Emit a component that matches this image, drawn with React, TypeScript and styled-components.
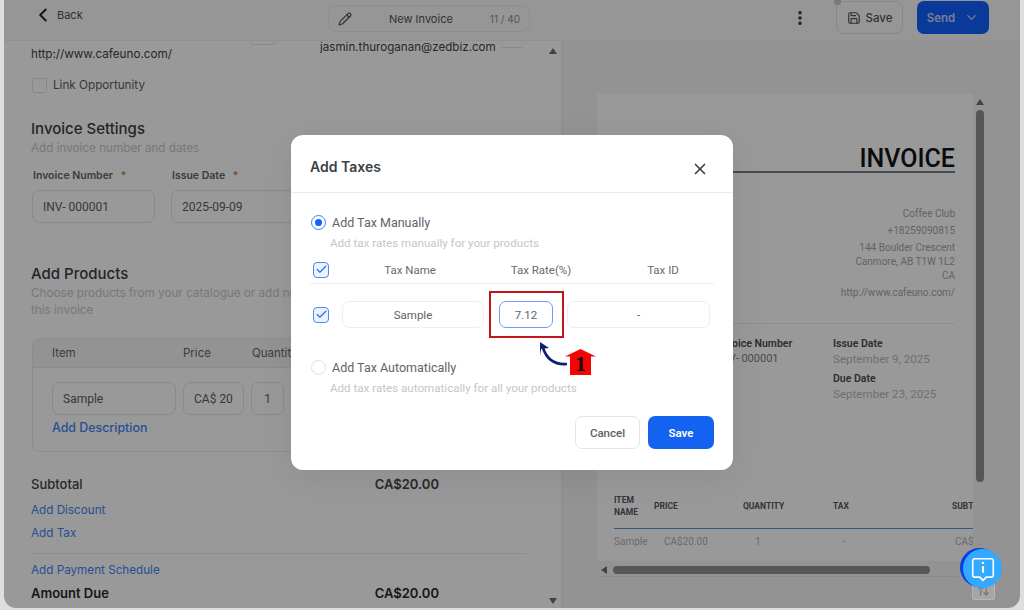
import React from "react";
import styled, { createGlobalStyle } from "styled-components";
import { ArrowUpDown, Check, ChevronDown, ChevronLeft, EllipsisVertical, Pencil, Save, X } from "lucide-react";

const GlobalStyle = createGlobalStyle`
  html, body {
    margin: 0;
    padding: 0;
    height: 100%;
    overflow: hidden;
  }
  * {
    box-sizing: border-box;
  }
  body {
    font-family: Inter, "Liberation Sans", sans-serif;
  }
`;

const Viewport = styled.div`
  width: 1024px;
  height: 610px;
  padding: 0 4px 2px;
  background-color: #dedede;
`;

const Frame = styled.div`
  position: relative;
  display: flex;
  flex-direction: column;
  height: 100%;
  background-color: #ffffff;
  border-radius: 0 0 12px 12px;
  overflow: hidden;
`;

const TopBar = styled.header`
  position: relative;
  z-index: 1;
  display: flex;
  align-items: center;
  flex: none;
  height: 41px;
  padding-bottom: 5px;
  padding-right: 31px;
  background-color: #fafafa;
  border-bottom: 1px solid #f0f0f0;
`;

const BackLink = styled.div`
  display: flex;
  align-items: center;
  gap: 3px;
  width: 324px;
  margin-bottom: 6px;
  padding-left: 28px;
  font-size: 11px;
  color: #4d5157;
`;

const TitlePill = styled.div`
  display: flex;
  align-items: center;
  width: 202px;
  height: 27px;
  margin-top: 2px;
  padding: 0 9px;
  border: 1px solid #eceded;
  border-radius: 8px;
  color: #50545b;
`;

const PillName = styled.span`
  flex: 1;
  text-align: center;
  font-size: 11px;
`;

const PillCount = styled.span`
  font-size: 10px;
  color: #8c8f94;
`;

const Actions = styled.div`
  display: flex;
  align-items: center;
  gap: 14px;
  margin-left: auto;
`;

const MoreButton = styled.div`
  display: flex;
  margin-right: 13px;
  color: #2e3136;
`;

const SaveDraft = styled.button`
  position: relative;
  display: flex;
  align-items: center;
  justify-content: center;
  gap: 5px;
  width: 67px;
  height: 33px;
  background: transparent;
  border: 1px solid #dfe2e6;
  border-radius: 8px;
  font: 500 11.5px Inter, sans-serif;
  color: #51555b;
`;

const ResizeDot = styled.span`
  position: absolute;
  top: -4px;
  left: -3px;
  width: 7px;
  height: 7px;
  border-radius: 50%;
  background-color: #c6c8cb;
`;

const SendButton = styled.button`
  display: flex;
  align-items: center;
  justify-content: center;
  gap: 9px;
  width: 72px;
  height: 33px;
  background-color: #1161ff;
  border: none;
  border-radius: 7px;
  font: 600 11.5px Inter, sans-serif;
  color: #c4d6f5;
`;

const Workspace = styled.div`
  display: grid;
  grid-template-columns: 558px 1fr;
  flex: 1;
  min-height: 0;
`;

const FormPane = styled.section`
  display: grid;
  grid-template-columns: 1fr 16px;
  min-height: 0;
  border-right: 1px solid #f0f0f0;
`;

const FormContent = styled.div`
  padding-left: 27px;
`;

const ScrollRail = styled.div`
  display: flex;
  flex-direction: column;
  align-items: center;
  justify-content: space-between;
  padding: 7px 0 4px;
`;

const ArrowUp = styled.span`
  border-left: 4px solid transparent;
  border-right: 4px solid transparent;
  border-bottom: 6px solid #6b6e72;
`;

const ArrowDown = styled.span`
  border-left: 4px solid transparent;
  border-right: 4px solid transparent;
  border-top: 6px solid #6b6e72;
`;

const ArrowLeft = styled.span`
  flex: none;
  border-top: 4px solid transparent;
  border-bottom: 4px solid transparent;
  border-right: 6px solid #6b6e72;
`;

const ContactRow = styled.div`
  display: flex;
  height: 36px;
`;

const Website = styled.div`
  width: 219px;
  padding-top: 5px;
  font-size: 11.7px;
  line-height: 16px;
  color: #3f4349;
`;

const Email = styled.div`
  font-size: 11.6px;
  line-height: 12px;
  color: #3f4349;
`;

const EmailRule = styled.span`
  align-self: flex-start;
  width: 20px;
  margin: 6px 0 0 6px;
  border-top: 1px solid #e4e4e4;
`;

const CutOffButton = styled.span`
  width: 25px;
  height: 4px;
  margin-right: 45px;
  border: 1px solid #e4e4e4;
  border-top: none;
  border-radius: 0 0 6px 6px;
`;

const OptionRow = styled.label`
  display: flex;
  align-items: center;
  gap: 6px;
  height: 16px;
  padding-left: 1px;
  font-size: 11.7px;
  color: #5a5e65;
`;

const EmptyCheck = styled.span`
  width: 15px;
  height: 15px;
  border: 1px solid #e0e2e5;
  border-radius: 3px;
`;

const SectionTitle = styled.h2<{ $top: number }>`
  margin: ${({ $top }) => $top}px 0 0;
  font-size: 15px;
  font-weight: 500;
  line-height: 20px;
  color: #3a3e45;
`;

const SectionHint = styled.p`
  margin: 1px 0 0;
  font-size: 11.7px;
  line-height: 17px;
  color: #c6c9ce;
`;

const FieldRow = styled.div`
  display: grid;
  grid-template-columns: 123px 1fr;
  column-gap: 16px;
  margin-top: 12px;
  padding-left: 1px;
`;

const FieldLabel = styled.label`
  display: block;
  height: 14px;
  margin-bottom: 7px;
  padding-left: 1px;
  font-size: 10.5px;
  font-weight: 600;
  line-height: 14px;
  color: #61656c;
`;

const Required = styled.span`
  margin-left: 5px;
  color: #c9823d;
`;

const TextBox = styled.div<{ $width?: number }>`
  display: flex;
  align-items: center;
  width: ${({ $width }) => ($width ? `${$width}px` : "auto")};
  height: 33px;
  padding: 0 10px;
  border: 1px solid #e4e5e8;
  border-radius: 7px;
  font-family: Roboto, sans-serif;
  font-size: 12px;
  white-space: nowrap;
  color: #5a5e65;
`;

const ProductTable = styled.div`
  width: 494px;
  height: 114px;
  margin: 19px 0 0 1px;
  border: 1px solid #ececee;
  border-radius: 7px;
  overflow: hidden;
`;

const ProductHead = styled.div`
  display: grid;
  grid-template-columns: 131px 69px 1fr;
  align-items: center;
  height: 29px;
  padding-left: 19px;
  background-color: #f5f5f6;
  border-bottom: 1px solid #ececee;
  font-size: 11.5px;
  color: #62666d;
`;

const ProductRow = styled.div`
  display: flex;
  gap: 7px;
  margin-top: 14px;
  padding-left: 19px;
`;

const ProductCell = styled(TextBox)<{ $center?: boolean }>`
  justify-content: ${({ $center }) => ($center ? "center" : "flex-start")};
`;

const DescriptionLink = styled.a`
  display: block;
  margin: 4px 0 0 19px;
  font-size: 12.4px;
  font-weight: 500;
  line-height: 17px;
  color: #3f86f5;
`;

const AmountRow = styled.div<{ $top: number; $strong?: boolean }>`
  display: flex;
  justify-content: space-between;
  width: 408px;
  margin-top: ${({ $top }) => $top}px;
  font-size: 13px;
  font-weight: ${({ $strong }) => ($strong ? 600 : 500)};
  line-height: 18px;
  color: ${({ $strong }) => ($strong ? "#25282d" : "#42464c")};
`;

const AmountValue = styled.span`
  font-weight: 600;
`;

const ActionLink = styled.a<{ $top: number }>`
  display: block;
  margin-top: ${({ $top }) => $top}px;
  font-size: 11.7px;
  line-height: 14px;
  color: #3f86f5;
`;

const FormRule = styled.hr`
  width: 495px;
  height: 1px;
  margin: 13px 0 0;
  background-color: #ececee;
  border: none;
`;

const PreviewPane = styled.section`
  display: flex;
  flex-direction: column;
  min-height: 0;
  padding: 53px 0 0 35px;
  background-color: #f5f5f5;
`;

const PaperRow = styled.div`
  display: flex;
  height: 467px;
`;

const Paper = styled.div`
  width: 376px;
  padding: 53px 18px 0 17px;
  background-color: #ffffff;
  overflow: hidden;
`;

const PaperRail = styled.div`
  display: flex;
  flex-direction: column;
  align-items: center;
  gap: 5px;
  width: 11px;
  margin-left: 1px;
  padding-top: 5px;
`;

const VerticalThumb = styled.div`
  width: 8px;
  height: 372px;
  background-color: #8f9093;
  border-radius: 4px;
`;

const InvoiceHeading = styled.h1`
  margin: 0;
  font-family: Roboto, sans-serif;
  font-size: 25px;
  font-weight: 500;
  line-height: 24px;
  text-align: right;
  color: #111317;
  border-bottom: 2px solid #7b7e83;
`;

const Address = styled.div`
  margin-top: 34px;
  text-align: right;
`;

const AddressLine = styled.div`
  margin-top: 3px;
  font-family: Roboto, sans-serif;
  font-size: 10px;
  line-height: 14px;
  color: #a3a6ab;
`;

const PaperRule = styled.hr`
  height: 1px;
  margin: 23px 0 0;
  background-color: #efefef;
  border: none;
`;

const MetaGrid = styled.div`
  display: grid;
  grid-template-columns: 115px 1fr;
  margin-top: 13px;
  padding-left: 104px;
  font-family: Roboto, sans-serif;
`;

const MetaLabel = styled.div<{ $top?: number }>`
  margin-top: ${({ $top }) => $top ?? 0}px;
  font-size: 10.5px;
  font-weight: 600;
  line-height: 14px;
  color: #4a4d52;
`;

const MetaValue = styled.div`
  font-size: 11.6px;
  line-height: 16px;
  color: #b7babf;
`;

const MetaNumber = styled(MetaValue)`
  font-size: 11px;
  color: #7c8086;
`;

const ItemsHead = styled.div`
  display: grid;
  grid-template-columns: 40px 89px 90px 119px 60px;
  align-items: center;
  width: 400px;
  height: 24px;
  margin-top: 92px;
  padding-bottom: 10px;
  box-sizing: content-box;
  border-bottom: 1px solid #5f95d8;
  font-family: Roboto, sans-serif;
  font-size: 8.5px;
  font-weight: 700;
  line-height: 12px;
  color: #55585d;
`;

const ItemsRow = styled.div`
  display: grid;
  grid-template-columns: 50px 91px 88px 112px 60px;
  width: 400px;
  margin-top: 6px;
  font-family: Roboto, sans-serif;
  font-size: 10px;
  line-height: 14px;
  color: #b0b3b8;
`;

const HorizontalRail = styled.div`
  display: flex;
  align-items: center;
  gap: 6px;
  height: 11px;
  margin: 3px 0 0 4px;
`;

const HorizontalThumb = styled.div`
  width: 317px;
  height: 8px;
  background-color: #8f9093;
  border-radius: 4px;
`;

const PreviewRule = styled.hr`
  height: 1px;
  width: 360px;
  margin: 1px 0 0 1px;
  background-color: #e6e6e6;
  border: none;
`;

const Overlay = styled.div`
  position: absolute;
  inset: 0;
  z-index: 2;
  display: flex;
  align-items: center;
  justify-content: center;
  padding-bottom: 3px;
  background-color: rgba(0, 0, 0, 0.4);
`;

const Modal = styled.div`
  width: 442px;
  height: 335px;
  background-color: #ffffff;
  border-radius: 12px;
  box-shadow: 0 8px 36px rgba(0, 0, 0, 0.08);
`;

const ModalHeader = styled.div`
  display: flex;
  align-items: center;
  justify-content: space-between;
  height: 58px;
  padding: 8px 24px 0 19px;
  border-bottom: 1px solid #e9ebee;
  color: #3d4046;
`;

const ModalTitle = styled.h3`
  margin: 0 0 2px;
  font-size: 14px;
  font-weight: 600;
  color: #3d4046;
`;

const CloseIcon = styled(X)`
  margin-top: 3px;
`;

const ModalBody = styled.div`
  padding: 0 19px;
`;

const RadioRow = styled.label<{ $top: number }>`
  display: flex;
  align-items: center;
  gap: 6px;
  height: 16px;
  margin-top: ${({ $top }) => $top}px;
  padding-left: 1px;
  font-family: Roboto, sans-serif;
  font-size: 12.5px;
  color: #5f636b;
`;

const Radio = styled.span<{ $on?: boolean }>`
  display: flex;
  align-items: center;
  justify-content: center;
  width: 15px;
  height: 15px;
  border: 1.5px solid ${({ $on }) => ($on ? "#3f7ff5" : "#dfe1e5")};
  border-radius: 50%;

  &::after {
    content: "";
    display: ${({ $on }) => ($on ? "block" : "none")};
    width: 7px;
    height: 7px;
    background-color: #1161ff;
    border-radius: 50%;
  }
`;

const RadioHint = styled.p`
  margin: 5px 0 0 20px;
  font-family: Roboto, sans-serif;
  font-size: 11.6px;
  line-height: 16px;
  color: #c3c6cc;
`;

const TaxHead = styled.div`
  display: grid;
  grid-template-columns: 32px 136px 126px 110px;
  align-items: center;
  height: 28px;
  margin-top: 5px;
  border-bottom: 1px solid #eceef0;
  font-family: Roboto, sans-serif;
  font-size: 11.5px;
  color: #666a72;
`;

const TaxHeadCell = styled.span<{ $shift?: number }>`
  padding-left: ${({ $shift }) => $shift ?? 0}px;
  text-align: center;
`;

const TaxRow = styled.div`
  display: grid;
  grid-template-columns: 32px 142px 83px 143px;
  align-items: center;
  margin-top: 17px;
`;

const CheckMark = styled.span`
  display: flex;
  align-items: center;
  justify-content: center;
  width: 16px;
  height: 16px;
  margin-left: 3px;
  background-color: #eaf1ff;
  border: 1.5px solid #4d88f5;
  border-radius: 4px;
  color: #2f6fe8;
`;

const TaxInput = styled.div<{ $active?: boolean }>`
  display: flex;
  align-items: center;
  justify-content: center;
  height: 27px;
  border: 1px solid ${({ $active }) => ($active ? "#6b9ff5" : "#eceef0")};
  border-radius: 7px;
  font-family: Roboto, sans-serif;
  font-size: 11.5px;
  color: #5f636b;
`;

const RateCell = styled.div`
  position: relative;
  width: 54px;
  margin-left: 15px;
`;

const RedFrame = styled.span`
  position: absolute;
  top: -10px;
  left: -10px;
  right: -11px;
  bottom: -10px;
  border: 2px solid #c3161c;
  pointer-events: none;
`;

const CurvedArrow = styled.svg`
  position: absolute;
  top: 39px;
  left: 37px;
`;

const StepBadge = styled.span`
  position: absolute;
  top: 48px;
  left: 66px;
  display: flex;
  align-items: flex-end;
  justify-content: center;
  width: 31px;
  height: 26px;
`;

const StepShape = styled.svg`
  position: absolute;
  inset: 0;
`;

const StepNumber = styled.span`
  position: relative;
  font-family: "Liberation Serif", serif;
  font-size: 22px;
  font-weight: 700;
  line-height: 23px;
  color: #141414;
`;

const ModalFooter = styled.div`
  display: flex;
  justify-content: flex-end;
  gap: 8px;
  margin-top: 20px;
`;

const CancelButton = styled.button`
  width: 65px;
  height: 33px;
  background-color: #ffffff;
  border: 1px solid #e3e5e8;
  border-radius: 7px;
  font: 500 11.5px Roboto, sans-serif;
  color: #5a5e65;
`;

const ConfirmButton = styled.button`
  width: 66px;
  height: 33px;
  background-color: #1463f0;
  border: none;
  border-radius: 7px;
  font: 600 11.5px Roboto, sans-serif;
  color: #ffffff;
`;

const ChatDock = styled.div`
  position: absolute;
  z-index: 3;
  top: 548px;
  left: 955px;
  width: 44px;
  height: 52px;
`;

const DockToggle = styled.div`
  position: absolute;
  left: 13px;
  bottom: 0;
  display: flex;
  align-items: center;
  justify-content: center;
  width: 23px;
  height: 19px;
  background-color: #a6a6a6;
  border: 1px solid #b3b5b8;
  border-radius: 2px;
  color: #6d7074;
`;

const ChatBubble = styled.div`
  position: absolute;
  top: 1px;
  left: 4px;
  display: flex;
  align-items: center;
  justify-content: center;
  width: 39px;
  height: 39px;
  background-color: #33a9ff;
  border-radius: 50%;
  box-shadow: -3px -1px 0 0 #0b3fe6;
`;

function ChatIcon() {
  return (
    <svg width="26" height="26" viewBox="0 0 24 24" fill="none" stroke="#ffffff" strokeWidth="1.5">
      <path d="M4.5 2.5h15a2 2 0 0 1 2 2v13a2 2 0 0 1-2 2h-4.5l-3 3-3-3H4.5a2 2 0 0 1-2-2v-13a2 2 0 0 1 2-2z" strokeLinejoin="round" />
      <path d="M12 9.5v6" strokeWidth="2" />
      <path d="M12 5.6v1.8" strokeWidth="2" />
    </svg>
  );
}

function TaxCheck() {
  return (
    <CheckMark>
      <Check size={13} strokeWidth={2.2} />
    </CheckMark>
  );
}

function App() {
  return (
    <Viewport>
      <GlobalStyle />
      <Frame>
        <TopBar>
          <BackLink>
            <ChevronLeft size={22} strokeWidth={2.2} color="#26282c" />
            Back
          </BackLink>
          <TitlePill>
            <Pencil size={14} />
            <PillName>New Invoice</PillName>
            <PillCount>11 / 40</PillCount>
          </TitlePill>
          <Actions>
            <MoreButton>
              <EllipsisVertical size={18} strokeWidth={2.6} />
            </MoreButton>
            <SaveDraft>
              <ResizeDot />
              <Save size={14} />
              Save
            </SaveDraft>
            <SendButton>
              Send
              <ChevronDown size={15} />
            </SendButton>
          </Actions>
        </TopBar>

        <Workspace>
          <FormPane>
            <FormContent>
              <ContactRow>
                <Website>http://www.cafeuno.com/</Website>
                <CutOffButton />
                <Email>jasmin.thuroganan@zedbiz.com</Email>
                <EmailRule />
              </ContactRow>
              <OptionRow>
                <EmptyCheck />
                Link Opportunity
              </OptionRow>

              <SectionTitle $top={26}>Invoice Settings</SectionTitle>
              <SectionHint>Add invoice number and dates</SectionHint>
              <FieldRow>
                <div>
                  <FieldLabel>
                    Invoice Number <Required>*</Required>
                  </FieldLabel>
                  <TextBox $width={123}>INV- 000001</TextBox>
                </div>
                <div>
                  <FieldLabel>
                    Issue Date <Required>*</Required>
                  </FieldLabel>
                  <TextBox>2025-09-09</TextBox>
                </div>
              </FieldRow>

              <SectionTitle $top={41}>Add Products</SectionTitle>
              <SectionHint>
                Choose products from your catalogue or add new ones to include in
                <br />
                this invoice
              </SectionHint>
              <ProductTable>
                <ProductHead>
                  <span>Item</span>
                  <span>Price</span>
                  <span>Quantity</span>
                </ProductHead>
                <ProductRow>
                  <ProductCell $width={124}>Sample</ProductCell>
                  <ProductCell $width={61}>CA$ 20</ProductCell>
                  <ProductCell $width={33} $center>1</ProductCell>
                </ProductRow>
                <DescriptionLink>Add Description</DescriptionLink>
              </ProductTable>

              <AmountRow $top={23}>
                <span>Subtotal</span>
                <AmountValue>CA$20.00</AmountValue>
              </AmountRow>
              <ActionLink $top={10}>Add Discount</ActionLink>
              <ActionLink $top={9}>Add Tax</ActionLink>
              <FormRule />
              <ActionLink $top={9}>Add Payment Schedule</ActionLink>
              <AmountRow $top={7} $strong>
                <span>Amount Due</span>
                <AmountValue>CA$20.00</AmountValue>
              </AmountRow>
            </FormContent>
            <ScrollRail>
              <ArrowUp />
              <ArrowDown />
            </ScrollRail>
          </FormPane>

          <PreviewPane>
            <PaperRow>
              <Paper>
                <InvoiceHeading>INVOICE</InvoiceHeading>
                <Address>
                  <AddressLine>Coffee Club</AddressLine>
                  <AddressLine>+18259090815</AddressLine>
                  <AddressLine>
                    144 Boulder Crescent
                    <br />
                    Canmore, AB T1W 1L2
                    <br />
                    CA
                  </AddressLine>
                  <AddressLine>http://www.cafeuno.com/</AddressLine>
                </Address>
                <PaperRule />
                <MetaGrid>
                  <div>
                    <MetaLabel>Invoice Number</MetaLabel>
                    <MetaNumber>INV- 000001</MetaNumber>
                  </div>
                  <div>
                    <MetaLabel>Issue Date</MetaLabel>
                    <MetaValue>September 9, 2025</MetaValue>
                    <MetaLabel $top={5}>Due Date</MetaLabel>
                    <MetaValue>September 23, 2025</MetaValue>
                  </div>
                </MetaGrid>
                <ItemsHead>
                  <span>
                    ITEM
                    <br />
                    NAME
                  </span>
                  <span>PRICE</span>
                  <span>QUANTITY</span>
                  <span>TAX</span>
                  <span>SUBTOTAL</span>
                </ItemsHead>
                <ItemsRow>
                  <span>Sample</span>
                  <span>CA$20.00</span>
                  <span>1</span>
                  <span>-</span>
                  <span>CA$20.00</span>
                </ItemsRow>
              </Paper>
              <PaperRail>
                <ArrowUp />
                <VerticalThumb />
              </PaperRail>
            </PaperRow>
            <HorizontalRail>
              <ArrowLeft />
              <HorizontalThumb />
            </HorizontalRail>
            <PreviewRule />
          </PreviewPane>
        </Workspace>

        <Overlay>
          <Modal>
            <ModalHeader>
              <ModalTitle>Add Taxes</ModalTitle>
              <CloseIcon size={18} strokeWidth={2.2} />
            </ModalHeader>
            <ModalBody>
              <RadioRow $top={21}>
                <Radio $on />
                Add Tax Manually
              </RadioRow>
              <RadioHint>Add tax rates manually for your products</RadioHint>
              <TaxHead>
                <TaxCheck />
                <TaxHeadCell>Tax Name</TaxHeadCell>
                <TaxHeadCell>Tax Rate(%)</TaxHeadCell>
                <TaxHeadCell $shift={8}>Tax ID</TaxHeadCell>
              </TaxHead>
              <TaxRow>
                <TaxCheck />
                <TaxInput>Sample</TaxInput>
                <RateCell>
                  <TaxInput $active>7.12</TaxInput>
                  <RedFrame />
                  <CurvedArrow width="34" height="28" viewBox="0 0 34 28" fill="none">
                    <path d="M31 24C19 25 11 20 7 8" stroke="#0d1f6e" strokeWidth="2.6" />
                    <path d="M4 2l9 6-8 1-1 7z" fill="#0d1f6e" />
                  </CurvedArrow>
                  <StepBadge>
                    <StepShape width="31" height="26" viewBox="0 0 31 26">
                      <path d="M15.5 0L31 7.5h-5V26H5V7.5H0z" fill="#f40404" />
                    </StepShape>
                    <StepNumber>1</StepNumber>
                  </StepBadge>
                </RateCell>
                <TaxInput>-</TaxInput>
              </TaxRow>
              <RadioRow $top={31}>
                <Radio />
                Add Tax Automatically
              </RadioRow>
              <RadioHint>Add tax rates automatically for all your products</RadioHint>
              <ModalFooter>
                <CancelButton>Cancel</CancelButton>
                <ConfirmButton>Save</ConfirmButton>
              </ModalFooter>
            </ModalBody>
          </Modal>
        </Overlay>

        <ChatDock>
          <DockToggle>
            <ArrowUpDown size={13} />
          </DockToggle>
          <ChatBubble>
            <ChatIcon />
          </ChatBubble>
        </ChatDock>
      </Frame>
    </Viewport>
  );
}

export default App;
